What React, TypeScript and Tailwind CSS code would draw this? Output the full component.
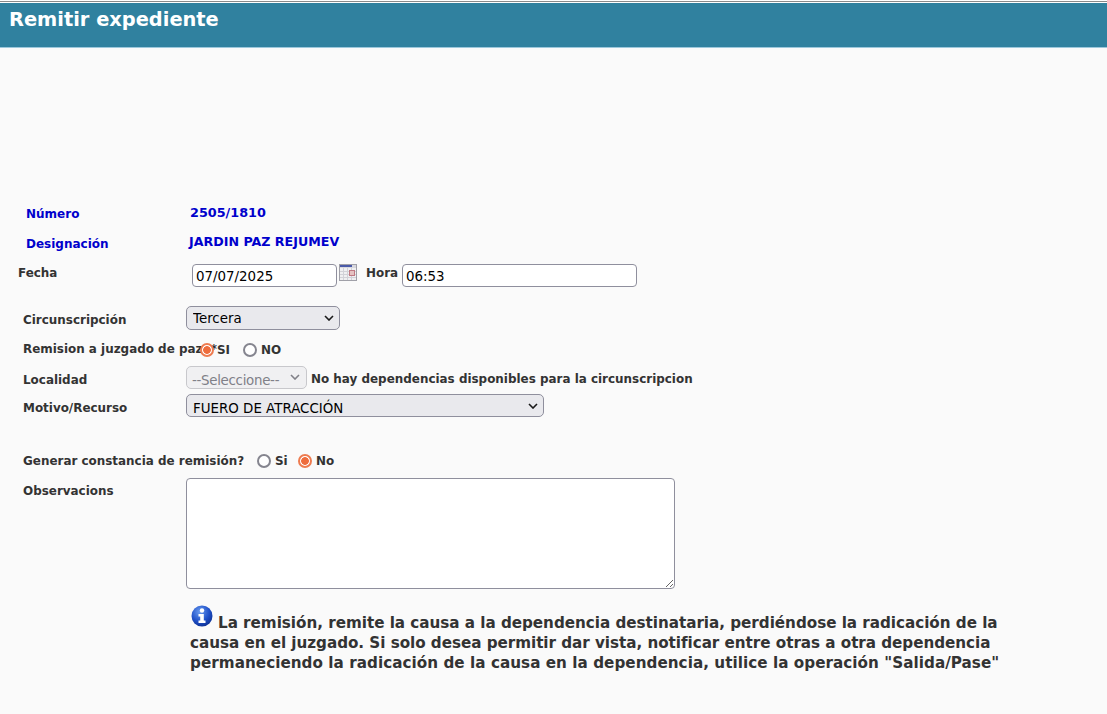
function Chevron({ right, color }: { right: string; color: string }) {
  return (
    <svg className={"pointer-events-none absolute top-1/2 -mt-[3px] " + right} width="10" height="6" viewBox="0 0 10 6">
      <polyline points="1,1 5,5 9,1" fill="none" stroke={color} strokeWidth="1.6" />
    </svg>
  );
}

export default function App() {
  const label = "font-['DejaVu_Sans',sans-serif] font-bold text-[11.95px] leading-[14px] text-[#333333] shrink-0";
  const blue = "text-[12px] font-bold text-[#0000cc]";
  const ctl = "font-['DejaVu_Sans',sans-serif] text-[13.4px] text-black";
  const radio =
    "m-0 h-[14px] w-[14px] shrink-0 appearance-none rounded-full border-2 border-[#85858f] bg-white checked:border-[#ee7b4f] checked:bg-[radial-gradient(circle,#ee6c3c_3.5px,#ffffff_4.2px)]";
  const selectBox = "block h-full w-full appearance-none rounded-[5px] border outline-none";
  return (
    <div className="h-[714px] w-[1107px] overflow-hidden bg-[#fafafa] font-['DejaVu_Sans',sans-serif]">
      <div className="h-[1px] bg-white" />
      <div className="h-[1px] bg-[#8a8a8a]" />
      <div className="h-[1px] bg-white" />
      <div className="h-[45px] border-b border-b-[#9cc8dc] bg-[#30819f] pl-[9px] pt-[5px]">
        <h1 className="text-[19.4px] font-bold leading-[24px] text-white">Remitir expediente</h1>
      </div>
      <div className="h-[158px]" />
      <div className="flex h-[16px] items-center pl-[26px]">
        <span className={blue + " w-[164px]"}>Número</span>
        <span className="-mt-[2px] text-[12.8px] font-bold text-[#0000cc]">2505/1810</span>
      </div>
      <div className="mt-[14px] flex h-[16px] items-center pl-[26px]">
        <span className={blue + " w-[163px]"}>Designación</span>
        <span className="-mt-[4px] text-[12.65px] font-bold text-[#0000cc]">JARDIN PAZ REJUMEV</span>
      </div>
      <div className="mt-[12px] flex h-[24px] items-start pl-[18px]">
        <span className={label + " w-[174px] mt-[2px]"}>Fecha</span>
        <input readOnly value="07/07/2025" className={ctl + " h-[23px] w-[145px] rounded-[4px] border border-[#8f8f9d] bg-white px-[3px] pt-[2px]"} />
        <svg className="ml-[2px]" width="18" height="17" viewBox="0 0 18 17">
          <rect x="0.5" y="0.5" width="17" height="16" fill="#f0f0f2" stroke="#a0a0a8" />
          <rect x="1" y="1" width="16" height="3" fill="#d8d8de" />
          <rect x="1" y="1" width="12" height="2" fill="#4a5aa8" />
          <path d="M1 7.5H17M1 10.5H17M1 13.5H17M4.5 4V16M8.5 4V16M12.5 4V16" stroke="#d2d2d8" fill="none" />
          <rect x="10.5" y="6.5" width="5" height="5" fill="#e6c2c2" stroke="#c07a84" />
        </svg>
        <span className={label + " ml-[9px] mt-[2px] w-[36px]"}>Hora</span>
        <input readOnly value="06:53" className={ctl + " h-[23px] w-[235px] rounded-[4px] border border-[#8f8f9d] bg-white px-[3px] pt-[2px]"} />
      </div>
      <div className="mt-[18px] flex h-[24px] items-center pl-[23px]">
        <span className={label + " w-[163px] mt-[4px]"}>Circunscripción</span>
        <div className="relative h-[24px] w-[154px]">
          <select className={ctl + " " + selectBox + " border-[#8f8f9d] bg-[#e9e9ed] pl-[6px] pt-[2px]"} defaultValue="Tercera">
            <option>Tercera</option>
          </select>
          <Chevron right="right-[6px]" color="#1a1a1a" />
        </div>
      </div>
      <div className="mt-[10px] flex h-[20px] items-center pl-[23px]">
        <span className={label + " w-[177px] whitespace-nowrap -mt-[2px]"}>Remision a juzgado de paz&nbsp;&nbsp;*</span>
        <input type="radio" name="a" defaultChecked className={radio} />
        <span className={label + " ml-[3px] w-[26px]"}>SI</span>
        <input type="radio" name="a" className={radio} />
        <span className={label + " ml-[4px]"}>NO</span>
      </div>
      <div className="mt-[5px] flex h-[24px] items-center pl-[23px]">
        <span className={label + " w-[163px] mt-[5px]"}>Localidad</span>
        <div className="relative h-[23px] w-[121px]">
          <select disabled className={selectBox + " border-[#c8c8cc] bg-[#f0f0f2] pl-[5px] pt-[4px] font-['DejaVu_Sans',sans-serif] text-[13.4px] tracking-[-0.3px] text-[#808088]"} defaultValue="s">
            <option value="s">--Seleccione--</option>
          </select>
          <Chevron right="right-[7px]" color="#808088" />
        </div>
        <span className={label + " ml-[4px] mt-[3px]"}>No hay dependencias disponibles para la circunscripcion</span>
      </div>
      <div className="mt-[5px] flex h-[23px] items-center pl-[23px]">
        <span className={label + " w-[163px] mt-[4px]"}>Motivo/Recurso</span>
        <div className="relative h-[23px] w-[358px]">
          <select className={ctl + " " + selectBox + " border-[#8f8f9d] bg-[#e9e9ed] pl-[6px] pt-[4px]"} defaultValue="f">
            <option value="f">FUERO DE ATRACCIÓN</option>
          </select>
          <Chevron right="right-[6px]" color="#1a1a1a" />
        </div>
      </div>
      <div className="mt-[34px] flex h-[20px] items-center pl-[23px]">
        <span className={label + " w-[234px] -mt-[1px]"}>Generar constancia de remisión?</span>
        <input type="radio" name="b" className={radio} />
        <span className={label + " ml-[4px] w-[23px]"}>Si</span>
        <input type="radio" name="b" defaultChecked className={radio} />
        <span className={label + " ml-[4px]"}>No</span>
      </div>
      <div className="mt-[7px] flex items-start pl-[23px]">
        <span className={label + " w-[163px] mt-[6px]"}>Observacions</span>
        <textarea className={ctl + " h-[111px] w-[489px] rounded-[4px] border border-[#8f8f9d] bg-white"} />
      </div>
      <div className="ml-[190px] mt-[16px] w-[830px] text-[15.2px] font-bold leading-[20px] text-[#333333]">
        <svg className="mb-[1px] ml-[1px] mr-[5px] inline-block align-baseline" width="22" height="22" viewBox="0 0 22 22">
          <defs>
            <radialGradient id="g" cx="40%" cy="30%" r="75%">
              <stop offset="0" stopColor="#6a9cf0" />
              <stop offset="0.6" stopColor="#1f50c8" />
              <stop offset="1" stopColor="#0c2f90" />
            </radialGradient>
          </defs>
          <circle cx="11" cy="11" r="10.5" fill="url(#g)" />
          <circle cx="11" cy="5.5" r="2.2" fill="#fff" />
          <path d="M7.5 9H12.8V15.5H14.5V18H7.5V15.5H9.2V11.5H7.5Z" fill="#fff" />
        </svg>
        <span className="tracking-[-0.03px]">La remisión, remite la causa a la dependencia destinataria, perdiéndose la radicación de la</span>
        <br />
        <span className="tracking-[-0.04px]">causa en el juzgado. Si solo desea permitir dar vista, notificar entre otras a otra dependencia</span>
        <br />
        <span className="tracking-[0.04px]">permaneciendo la radicación de la causa en la dependencia, utilice la operación "Salida/Pase"</span>
      </div>
    </div>
  );
}
